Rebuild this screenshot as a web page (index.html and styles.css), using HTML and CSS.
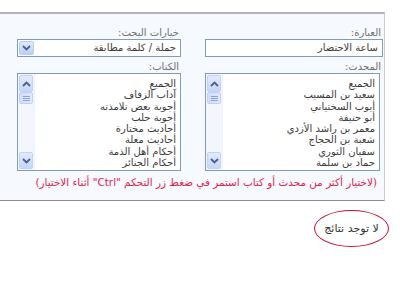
FILE: index.html
```html
<!DOCTYPE html>
<html lang="ar" dir="rtl">
<head>
    <meta charset="UTF-8">
    <title>البحث</title>
    <link rel="stylesheet" href="styles.css">
</head>
<body>
    <div class="panel">
        <div class="grid">
            <div class="field">
                <label>العبارة:</label>
                <div class="textbox">ساعة الاحتضار</div>
            </div>
            <div class="field">
                <label>خيارات البحث:</label>
                <div class="combo">
                    <span class="combo-text">جملة / كلمة مطابقة</span>
                    <span class="combo-btn">
                        <svg width="9" height="6" viewBox="0 0 9 6"><path d="M1 1 L4.5 4.5 L8 1" fill="none" stroke="#4d6185" stroke-width="1.8"/></svg>
                    </span>
                </div>
            </div>
            <div class="field">
                <label>المحدث:</label>
                <div class="listbox">
                    <ul class="items">
                        <li>الجميع</li>
                        <li>سعيد بن المسيب</li>
                        <li>أيوب السختياني</li>
                        <li>أبو حنيفة</li>
                        <li>معمر بن راشد الأزدي</li>
                        <li>شعبة بن الحجاج</li>
                        <li>سفيان الثوري</li>
                        <li>حماد بن سلمة</li>
                    </ul>
                    <div class="scrollbar">
                        <span class="sb-btn">
                            <svg width="9" height="6" viewBox="0 0 9 6"><path d="M1 5 L4.5 1.5 L8 5" fill="none" stroke="#4d6185" stroke-width="1.8"/></svg>
                        </span>
                        <span class="sb-thumb"><i></i><i></i><i></i></span>
                        <span class="sb-track"></span>
                        <span class="sb-btn">
                            <svg width="9" height="6" viewBox="0 0 9 6"><path d="M1 1 L4.5 4.5 L8 1" fill="none" stroke="#4d6185" stroke-width="1.8"/></svg>
                        </span>
                    </div>
                </div>
            </div>
            <div class="field">
                <label>الكتاب:</label>
                <div class="listbox">
                    <ul class="items">
                        <li>الجميع</li>
                        <li>آداب الزفاف</li>
                        <li>أجوبة بعض تلامذته</li>
                        <li>أجوبة حلب</li>
                        <li>أحاديث مختارة</li>
                        <li>أحاديث معلة</li>
                        <li>أحكام أهل الذمة</li>
                        <li>أحكام الجنائز</li>
                    </ul>
                    <div class="scrollbar">
                        <span class="sb-btn">
                            <svg width="9" height="6" viewBox="0 0 9 6"><path d="M1 5 L4.5 1.5 L8 5" fill="none" stroke="#4d6185" stroke-width="1.8"/></svg>
                        </span>
                        <span class="sb-thumb"><i></i><i></i><i></i></span>
                        <span class="sb-track"></span>
                        <span class="sb-btn">
                            <svg width="9" height="6" viewBox="0 0 9 6"><path d="M1 1 L4.5 4.5 L8 1" fill="none" stroke="#4d6185" stroke-width="1.8"/></svg>
                        </span>
                    </div>
                </div>
            </div>
        </div>
        <p class="note">(لاختيار أكثر من محدث أو كتاب استمر في ضغط زر التحكم "Ctrl" أثناء الاختيار)</p>
    </div>

    <div class="result">
        <span class="oval">لا توجد نتائج</span>
    </div>
</body>
</html>
```

FILE: styles.css
```css
body {
    margin: 0;
    background-color: #fff;
    font-family: "DejaVu Sans", sans-serif;
    font-size: 10px;
    color: #3a3a3a;
    overflow: hidden;
}

.panel {
    width: 383px;
    margin: 12px 15px 0 0;
    padding: 13px 1px 12px 0;
    background-color: #f6f9fd;
    border-top: 2px solid #b4b4b4;
    border-right: 1px solid #c9ccd0;
    border-bottom: 1px solid #8c8c8c;
}

.grid {
    display: grid;
    grid-template-columns: 178px 164px;
    column-gap: 24px;
    row-gap: 4px;
}

.field label {
    display: block;
    height: 12px;
    line-height: 12px;
    padding-right: 2px;
    color: #707070;
}

.textbox,
.combo {
    height: 16px;
    line-height: 16px;
    border: 1px solid #7f9db9;
    background-color: #fff;
    padding-right: 4px;
    display: flex;
    align-items: center;
}

.combo {
    padding-left: 1px;
}

.combo-text {
    flex: 1;
}

.combo-btn {
    width: 15px;
    height: 14px;
    display: flex;
    align-items: center;
    justify-content: center;
    background: linear-gradient(#dde8fd, #bcd0f8);
    border: 1px solid #b8cbf2;
    border-radius: 2px;
    box-sizing: border-box;
}

.listbox {
    height: 96px;
    border: 1px solid #7f9db9;
    background-color: #fff;
    display: flex;
    margin-right: 3px;
}

.field:nth-child(4) .listbox {
    margin-right: 0;
}

.items {
    flex: 1;
    list-style: none;
    margin: 0;
    padding: 4px 4px 0 0;
    line-height: 11.3px;
    overflow: hidden;
}

.scrollbar {
    width: 16px;
    display: flex;
    flex-direction: column;
    background-color: #f3f6fd;
    border-right: 1px solid #eef2fb;
}

.sb-btn {
    height: 15px;
    margin: 1px 1px 0;
    display: flex;
    align-items: center;
    justify-content: center;
    background: linear-gradient(#e2ebfe, #c4d6fb);
    border: 1px solid #c3d3f5;
    border-radius: 2px;
}

.sb-btn:last-child {
    margin: 0 1px 1px;
}

.sb-thumb {
    height: 10px;
    margin: 0 1px;
    display: flex;
    flex-direction: column;
    align-items: center;
    justify-content: center;
    gap: 1px;
    background: linear-gradient(90deg, #cfdcfb, #e1e9fd);
    border: 1px solid #c0cff2;
    border-radius: 2px;
}

.sb-thumb i {
    display: block;
    width: 7px;
    height: 1px;
    background-color: #8aa3d8;
}

.sb-track {
    flex: 1;
}

.note {
    margin: 5px 6px 0 0;
    color: #e2204a;
    font-size: 10.4px;
    line-height: 12px;
}

.result {
    padding: 9px 11px 0 0;
}

.oval {
    display: inline-flex;
    align-items: center;
    justify-content: center;
    width: 73px;
    height: 35px;
    border: 1px solid #c8102e;
    border-radius: 50%;
    font-size: 11px;
    color: #333;
}
```
